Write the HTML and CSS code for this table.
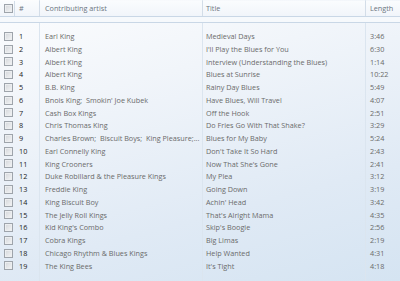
FILE: index.html
```html
<!DOCTYPE html>
<html>
<head>
<meta charset="utf-8">
<link rel="stylesheet" href="styles.css">
</head>
<body>
<div class="list">
  <div class="cols">
    <div class="col c-chk"></div>
    <div class="col c-num"></div>
    <div class="col c-artist"></div>
    <div class="col c-title"></div>
    <div class="col c-len"></div>
  </div>
  <div class="header row">
    <div class="c-chk"><span class="box"></span></div>
    <div class="c-num">#</div>
    <div class="c-artist">Contributing artist</div>
    <div class="c-title">Title</div>
    <div class="c-len">Length</div>
  </div>
  <div class="band"></div>
  <div class="body">
    <div class="row"><div class="c-chk"><span class="box"></span></div><div class="c-num">1</div><div class="c-artist">Earl King</div><div class="c-title">Medieval Days</div><div class="c-len">3:46</div></div>
    <div class="row"><div class="c-chk"><span class="box"></span></div><div class="c-num">2</div><div class="c-artist">Albert King</div><div class="c-title">I'll Play the Blues for You</div><div class="c-len">6:30</div></div>
    <div class="row"><div class="c-chk"><span class="box"></span></div><div class="c-num">3</div><div class="c-artist">Albert King</div><div class="c-title">Interview (Understanding the Blues)</div><div class="c-len">1:14</div></div>
    <div class="row"><div class="c-chk"><span class="box"></span></div><div class="c-num">4</div><div class="c-artist">Albert King</div><div class="c-title">Blues at Sunrise</div><div class="c-len">10:22</div></div>
    <div class="row"><div class="c-chk"><span class="box"></span></div><div class="c-num">5</div><div class="c-artist">B.B. King</div><div class="c-title">Rainy Day Blues</div><div class="c-len">5:49</div></div>
    <div class="row"><div class="c-chk"><span class="box"></span></div><div class="c-num">6</div><div class="c-artist">Bnois King;&nbsp; Smokin' Joe Kubek</div><div class="c-title">Have Blues, Will Travel</div><div class="c-len">4:07</div></div>
    <div class="row"><div class="c-chk"><span class="box"></span></div><div class="c-num">7</div><div class="c-artist">Cash Box Kings</div><div class="c-title">Off the Hook</div><div class="c-len">2:51</div></div>
    <div class="row"><div class="c-chk"><span class="box"></span></div><div class="c-num">8</div><div class="c-artist">Chris Thomas King</div><div class="c-title">Do Fries Go With That Shake?</div><div class="c-len">3:29</div></div>
    <div class="row"><div class="c-chk"><span class="box"></span></div><div class="c-num">9</div><div class="c-artist">Charles Brown;&nbsp; Biscuit Boys;&nbsp; King Pleasure;...</div><div class="c-title">Blues for My Baby</div><div class="c-len">5:24</div></div>
    <div class="row"><div class="c-chk"><span class="box"></span></div><div class="c-num">10</div><div class="c-artist">Earl Connelly King</div><div class="c-title">Don't Take It So Hard</div><div class="c-len">2:43</div></div>
    <div class="row"><div class="c-chk"><span class="box"></span></div><div class="c-num">11</div><div class="c-artist">King Crooners</div><div class="c-title">Now That She's Gone</div><div class="c-len">2:41</div></div>
    <div class="row"><div class="c-chk"><span class="box"></span></div><div class="c-num">12</div><div class="c-artist">Duke Robillard &amp; the Pleasure Kings</div><div class="c-title">My Plea</div><div class="c-len">3:12</div></div>
    <div class="row"><div class="c-chk"><span class="box"></span></div><div class="c-num">13</div><div class="c-artist">Freddie King</div><div class="c-title">Going Down</div><div class="c-len">3:19</div></div>
    <div class="row"><div class="c-chk"><span class="box"></span></div><div class="c-num">14</div><div class="c-artist">King Biscuit Boy</div><div class="c-title">Achin' Head</div><div class="c-len">3:42</div></div>
    <div class="row"><div class="c-chk"><span class="box"></span></div><div class="c-num">15</div><div class="c-artist">The Jelly Roll Kings</div><div class="c-title">That's Alright Mama</div><div class="c-len">4:35</div></div>
    <div class="row"><div class="c-chk"><span class="box"></span></div><div class="c-num">16</div><div class="c-artist">Kid King's Combo</div><div class="c-title">Skip's Boogie</div><div class="c-len">2:56</div></div>
    <div class="row"><div class="c-chk"><span class="box"></span></div><div class="c-num">17</div><div class="c-artist">Cobra Kings</div><div class="c-title">Big Limas</div><div class="c-len">2:19</div></div>
    <div class="row"><div class="c-chk"><span class="box"></span></div><div class="c-num">18</div><div class="c-artist">Chicago Rhythm &amp; Blues Kings</div><div class="c-title">Help Wanted</div><div class="c-len">4:31</div></div>
    <div class="row"><div class="c-chk"><span class="box"></span></div><div class="c-num">19</div><div class="c-artist">The King Bees</div><div class="c-title">It's Tight</div><div class="c-len">4:18</div></div>
  </div>
</div>
</body>
</html>
```
FILE: styles.css
```css
html, body {
  margin: 0;
  padding: 0;
}
body {
  width: 400px;
  height: 281px;
  overflow: hidden;
  font-family: "Open Sans", "DejaVu Sans", sans-serif;
  font-size: 7.25px;
  color: #6a6a6a;
}
.list {
  position: relative;
  width: 400px;
  height: 281px;
  background: linear-gradient(165deg, #fcfdfe 0%, #f1f5fa 30%, #e0eaf5 70%, #d5e4f2 100%);
  overflow: hidden;
}
.cols {
  position: absolute;
  inset: 0;
  display: flex;
  pointer-events: none;
}
.col {
  height: 100%;
  box-sizing: border-box;
}
.cols .c-num, .cols .c-artist, .cols .c-title {
  border-right: 1px solid #dbe5ef;
}
.row {
  display: flex;
  align-items: center;
  height: 12.75px;
  line-height: 12.75px;
  white-space: nowrap;
}
.c-chk { width: 15px; flex: none; display: flex; align-items: center; }
.c-num { width: 25px; flex: none; box-sizing: border-box; padding-left: 4px; }
.c-artist { width: 163px; flex: none; box-sizing: border-box; padding-left: 5px; }
.c-title { width: 163px; flex: none; box-sizing: border-box; padding-left: 3px; }
.c-len { flex: 1; box-sizing: border-box; padding-left: 4px; }
.box {
  display: block;
  width: 7px;
  height: 7px;
  margin-left: 4px;
  border: 1px solid #9ea4ab;
  background: linear-gradient(135deg, #d3d6da, #f4f5f6);
  box-shadow: inset 0 0 0 1px #eceef0;
}
.header {
  position: relative;
  height: 15px;
  margin-top: 1px;
  background: linear-gradient(#fafcfe, #f1f5fa);
  border-bottom: 1px solid #c9d7e6;
  color: #6b7480;
}
.header .c-chk, .header .c-num, .header .c-artist, .header .c-title {
  border-right: 1px solid #d3dde8;
  height: 100%;
  box-sizing: border-box;
}
.header > div { display: flex; align-items: center; }
.band {
  position: relative;
  height: 5px;
  border-bottom: 1px solid #c9d7e6;
  background: #f6f9fc;
}
.body {
  position: relative;
  padding-top: 7px;
}
.body .c-num {
  color: #222222;
}
```
